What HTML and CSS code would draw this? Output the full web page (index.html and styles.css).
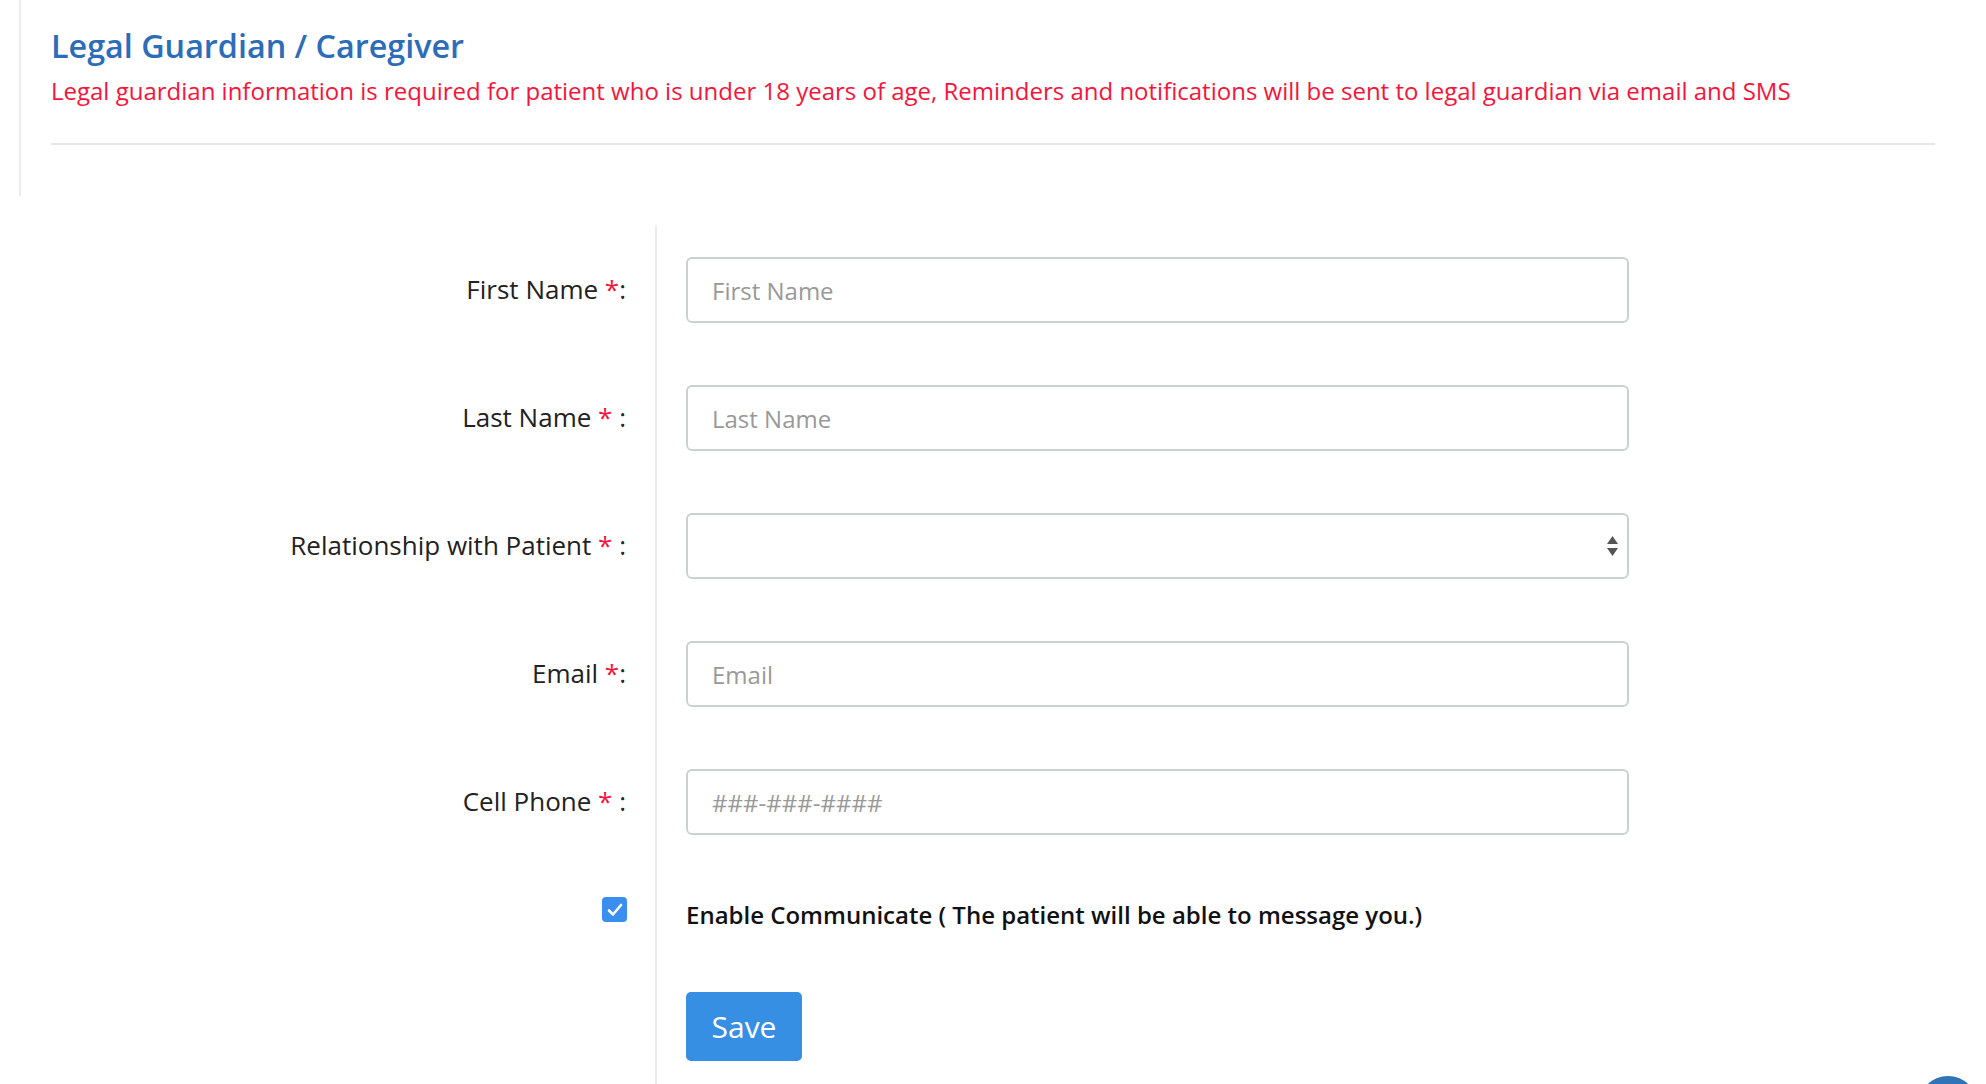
FILE: index.html
```html
<!DOCTYPE html>
<html lang="en">
<head>
<meta charset="utf-8">
<title>Legal Guardian / Caregiver</title>
<link rel="stylesheet" href="styles.css">
</head>
<body>
<div class="page">
  <header class="header">
    <h1 class="title">Legal Guardian / Caregiver</h1>
    <p class="notice">Legal guardian information is required for patient who is under 18 years of age, Reminders and notifications will be sent to legal guardian via email and SMS</p>
    <div class="divider"></div>
  </header>

  <form class="form">
    <label class="label" for="fn">First Name <span class="req">*</span>:</label>
    <div class="field"><input id="fn" class="input" type="text" placeholder="First Name"></div>

    <label class="label" for="ln">Last Name <span class="req">*</span> :</label>
    <div class="field"><input id="ln" class="input" type="text" placeholder="Last Name"></div>

    <label class="label" for="rel">Relationship with Patient <span class="req">*</span> :</label>
    <div class="field">
      <div class="select">
        <span class="arrows">
          <svg width="11" height="21" viewBox="0 0 11 21"><path d="M5.5 0 L11 8 L0 8 Z" fill="#555"/><path d="M0 12 L11 12 L5.5 20 Z" fill="#555"/></svg>
        </span>
      </div>
    </div>

    <label class="label" for="em">Email <span class="req">*</span>:</label>
    <div class="field"><input id="em" class="input" type="text" placeholder="Email"></div>

    <label class="label" for="cp">Cell Phone <span class="req">*</span> :</label>
    <div class="field"><input id="cp" class="input" type="text" placeholder="###-###-####"></div>

    <div class="label check-cell">
      <span class="checkbox">
        <svg width="16" height="14" viewBox="0 0 16 14"><path d="M2 7.5 L6 11.5 L14 2" fill="none" stroke="#fff" stroke-width="2.6" stroke-linecap="round" stroke-linejoin="round"/></svg>
      </span>
    </div>
    <div class="field check-text">Enable Communicate ( The patient will be able to message you.)</div>

    <div class="label empty"></div>
    <div class="field save-cell"><button type="button" class="save">Save</button></div>
  </form>
</div>
<div class="chat-bubble"></div>
</body>
</html>
```

FILE: styles.css
```css
html, body {
  margin: 0;
  padding: 0;
  background: #fff;
  font-family: "Open Sans", "Liberation Sans", sans-serif;
  color: #222;
  overflow: hidden;
}

.page {
  width: 1986px;
  height: 1084px;
}

.header {
  margin-left: 19px;
  border-left: 2px solid #ececec;
  height: 196px;
  box-sizing: border-box;
  padding: 25px 51px 0 30px;
}

.title {
  margin: 0;
  font-size: 32.3px;
  line-height: 40px;
  font-weight: 600;
  color: #2b6db8;
}

.notice {
  margin: 10px 0 0;
  font-size: 24px;
  line-height: 32px;
  color: #f5143c;
}

.divider {
  margin-top: 36px;
  height: 2px;
  background: #e6e6e6;
}

.form {
  margin-top: 29px;
  display: grid;
  grid-template-columns: 655px 1fr;
}

.label {
  display: flex;
  align-items: center;
  justify-content: flex-end;
  padding: 31px 29px 31px 0;
  font-size: 26px;
  color: #222;
  white-space: pre;
}

.req {
  color: #f5143c;
}

.field {
  border-left: 2px solid #ececec;
  padding: 32px 0 30px 29px;
}

.input, .select {
  display: block;
  box-sizing: border-box;
  width: 943px;
  height: 66px;
  border: 2px solid #ccd0d5;
  border-radius: 6px;
  padding: 0 24px;
  font-family: "Open Sans", "Liberation Sans", sans-serif;
  font-size: 24px;
  color: #333;
  background: #fff;
  outline: none;
}

.input::placeholder {
  color: #999;
}

.select {
  display: flex;
  align-items: center;
  justify-content: flex-end;
  padding-right: 9px;
}

.arrows {
  display: flex;
}

.check-cell {
  padding-top: 30px;
  padding-bottom: 36px;
  padding-right: 28px;
}

.checkbox {
  width: 25px;
  height: 25px;
  border-radius: 4px;
  background: #3a8ef0;
  display: flex;
  align-items: center;
  justify-content: center;
}

.check-text {
  display: flex;
  align-items: center;
  padding-top: 33px;
  padding-bottom: 29px;
  font-size: 24px;
  font-weight: 600;
  color: #111;
}

.empty {
  padding: 0;
}

.save-cell {
  padding-top: 32px;
  padding-bottom: 40px;
}

.save {
  width: 116px;
  height: 69px;
  border: none;
  border-radius: 5px;
  background: #378fe3;
  color: #fff;
  font-family: "Open Sans", "Liberation Sans", sans-serif;
  font-size: 30px;
  padding: 0;
}

.chat-bubble {
  position: fixed;
  right: 8px;
  bottom: -52px;
  width: 60px;
  height: 60px;
  border-radius: 50%;
  background: #2f74b6;
}
```
